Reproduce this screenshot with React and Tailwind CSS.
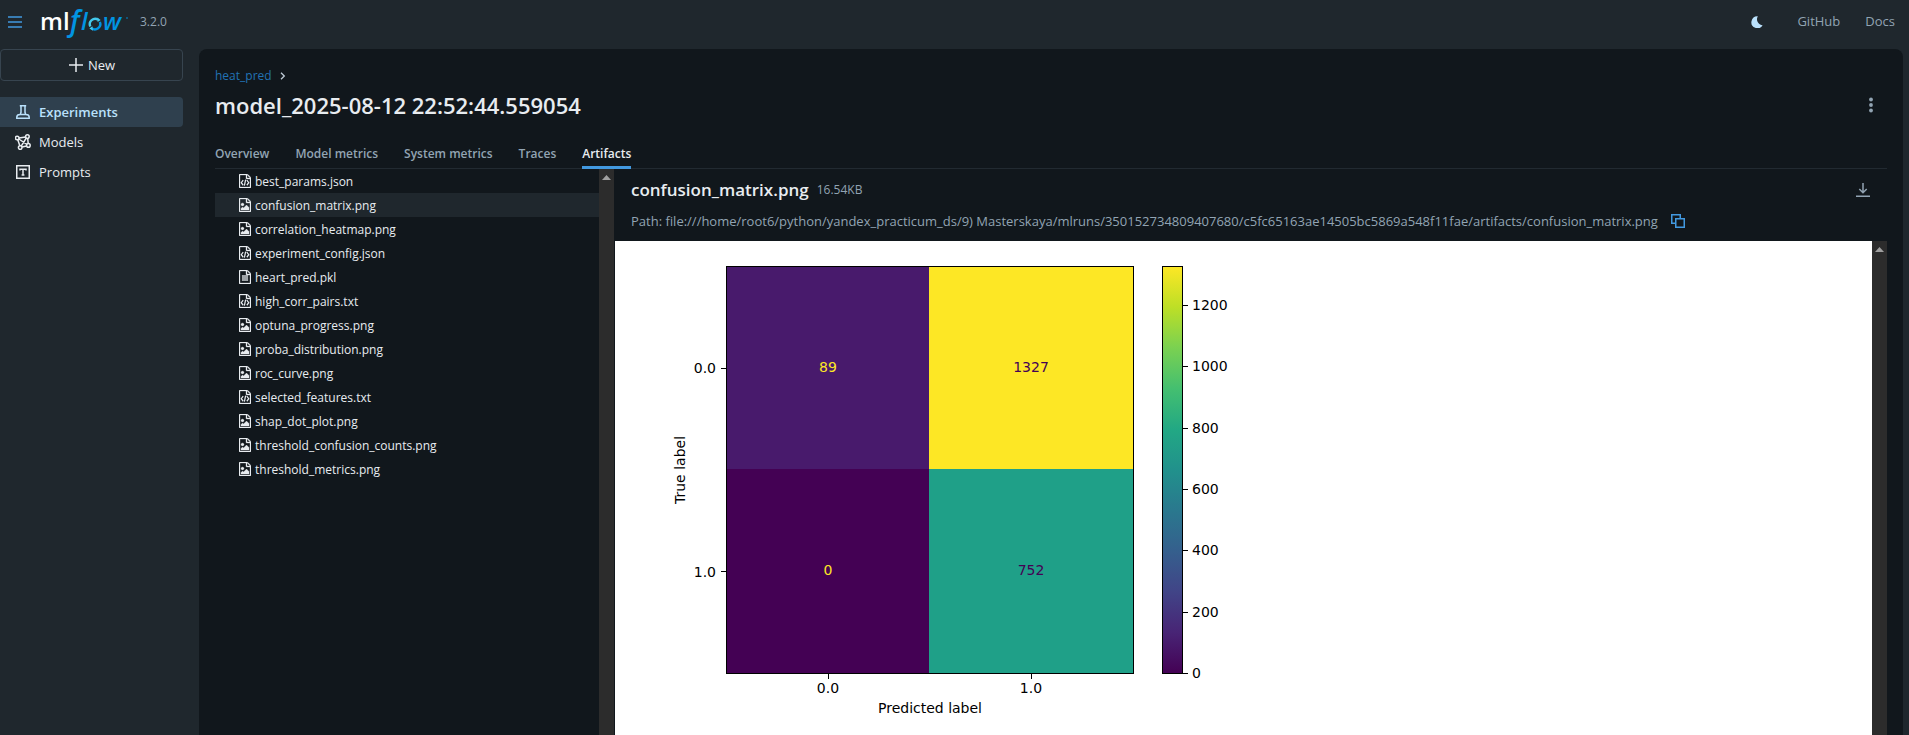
import React from "react";

const FILES = [
  ["best_params.json", "code"],
  ["confusion_matrix.png", "image"],
  ["correlation_heatmap.png", "image"],
  ["experiment_config.json", "code"],
  ["heart_pred.pkl", "text"],
  ["high_corr_pairs.txt", "code"],
  ["optuna_progress.png", "image"],
  ["proba_distribution.png", "image"],
  ["roc_curve.png", "image"],
  ["selected_features.txt", "code"],
  ["shap_dot_plot.png", "image"],
  ["threshold_confusion_counts.png", "image"],
  ["threshold_metrics.png", "image"],
];

const TABS = ["Overview", "Model metrics", "System metrics", "Traces", "Artifacts"];

function FileIcon({ kind }) {
  return (
    <svg viewBox="0 0 1536 1792" className="h-[14px] w-3 shrink-0" fill="currentColor" stroke="currentColor" strokeWidth="40" aria-hidden="true">
      <path d="M1468 380q28 28 48 76t20 88v1152q0 40-28 68t-68 28h-1344q-40 0-68-28t-28-68v-1600q0-40 28-68t68-28h896q40 0 88 20t76 48zm-444-244v376h376q-10-29-22-41l-313-313q-12-12-41-22zm384 1528v-1024h-416q-40 0-68-28t-28-68v-416h-768v1536h1280z" />
      {kind === "image" && (
        <path d="M1280 1216v320h-1024v-192l192-192 128 128 384-384zM448 1024q-80 0-136-56t-56-136 56-136 136-56 136 56 56 136-56 136-136 56z" />
      )}
      {kind === "code" && (
        <path d="M540 780l-250 330 250 330M1000 780l250 330-250 330M850 720l-160 780" fill="none" strokeWidth="160" />
      )}
      {kind === "text" && <path d="M384 704h768v128h-768zM384 960h768v128h-768zM384 1216h768v128h-768z" />}
    </svg>
  );
}

function FlaskIcon() {
  return (
    <svg viewBox="0 0 16 16" className="size-4" fill="none" stroke="currentColor" strokeWidth="1.5" aria-hidden="true">
      <path d="M4.8 1.75h6.4M6 1.75v6.5L5.2 10.4M10 1.75v6.5l.8 2.15M5.2 10.4h5.6c1.9 0 3.4 1.2 3.4 2.6v1.25H1.8V13c0-1.4 1.5-2.6 3.4-2.6z" />
    </svg>
  );
}

function ModelsIcon() {
  return (
    <svg viewBox="0 0 16 16" className="size-4" fill="none" stroke="currentColor" strokeWidth="1.5" aria-hidden="true">
      <circle cx="2.2" cy="4" r="1.8" />
      <circle cx="12.4" cy="2.6" r="1.8" />
      <circle cx="13.4" cy="11.4" r="1.8" />
      <circle cx="5.2" cy="13.6" r="1.8" />
      <path d="M4 3.9l6.6-1M12.7 4.4l.5 5.2M11.7 11.9L7 13.1M4.8 11.8L2.8 5.700M3.8 5l8.1 5.400M11.300 4L6.200 12.100" />
    </svg>
  );
}

function PromptsIcon() {
  return (
    <svg viewBox="0 0 16 16" className="size-4" fill="none" stroke="currentColor" strokeWidth="1.5" aria-hidden="true">
      <path d="M1.75 1.75h12.5v12.5H1.75zM5 6.6V5.2h6v1.4M8 5.2v5.9M6.6 11.1h2.8" />
    </svg>
  );
}

function Logo() {
  return (
    <svg viewBox="0 0 90 44" className="h-11 w-[90px] overflow-visible" role="img" aria-label="mlflow">
      <text x="0" y="30" fontFamily="Open Sans, sans-serif" fontSize="24" fontWeight="600" fill="#fff">ml</text>
      <g fill="#0194e2" fontFamily="Open Sans, sans-serif" fontStyle="italic" fontWeight="600">
        <text x="30" y="31" fontSize="28">f</text>
        <text x="41" y="30" fontSize="24">l</text>
        <text x="63" y="30" fontSize="24">w</text>
      </g>
      <g fill="none" strokeWidth="2.4">
        <path d="M50.3 26.5a5.4 5.4 0 0 1 7.8-6.8" stroke="#43c9ed" />
        <path d="M59.9 21.9a5.4 5.4 0 0 1-8.4 6.2" stroke="#0194e2" />
      </g>
      <path d="M57.2 17.6l.4 4.4 3.1-2zM53 30.8l-.6-4.6-3 2.4z" fill="#43c9ed" />
      <circle cx="87" cy="18" r="0.8" fill="#0194e2" />
    </svg>
  );
}

function Scrollbar() {
  return (
    <div className="w-[15px] shrink-0 bg-[#2c2c2c] pt-[6px]" aria-hidden="true">
      <svg viewBox="0 0 15 5" className="w-[15px]" fill="#a0a0a0">
        <path d="M7.5 0l4.5 5h-9z" />
      </svg>
    </div>
  );
}

const VIRIDIS = ["#440154", "#482475", "#414487", "#355f8d", "#2a788e", "#21918c", "#22a884", "#44bf70", "#7ad151", "#bddf26", "#fde725"];

function ConfusionMatrix() {
  const barTicks = [0, 200, 400, 600, 800, 1000, 1200];
  return (
    <svg viewBox="0 0 704 528" className="h-[528px] w-[704px] shrink-0" fontFamily="DejaVu Sans, sans-serif" fontSize="14" role="img" aria-label="Confusion matrix">
      <defs>
        <linearGradient id="viridis" x1="0" y1="1" x2="0" y2="0">
          {VIRIDIS.map((c, i) => (
            <stop key={c} offset={i / 10} stopColor={c} />
          ))}
        </linearGradient>
      </defs>
      <rect x="111" y="25" width="203" height="203" fill="#481a6c" />
      <rect x="314" y="25" width="205" height="203" fill="#fde725" />
      <rect x="111" y="228" width="203" height="204" fill="#440154" />
      <rect x="314" y="228" width="205" height="204" fill="#1fa088" />
      <rect x="111.5" y="25.5" width="407" height="407" fill="none" stroke="#000" />
      <g textAnchor="middle">
        <text x="213" y="131" fill="#fde725">89</text>
        <text x="416" y="131" fill="#440154">1327</text>
        <text x="213" y="334" fill="#fde725">0</text>
        <text x="416" y="334" fill="#440154">752</text>
        <text x="213" y="452">0.0</text>
        <text x="416" y="452">1.0</text>
        <text x="315" y="472">Predicted label</text>
        <text transform="translate(70 229) rotate(-90)">True label</text>
      </g>
      <g textAnchor="end">
        <text x="101" y="132">0.0</text>
        <text x="101" y="336">1.0</text>
      </g>
      <path d="M106 127.5h5M106 330.5h5M213.5 433v5M416.5 433v5" stroke="#000" />
      <rect x="547.5" y="25.5" width="20" height="407" fill="url(#viridis)" stroke="#000" />
      {barTicks.map((v) => {
        const y = Math.round(432 - (v / 1327) * 407);
        return (
          <g key={v}>
            <path d={`M568 ${y + 0.5}h5`} stroke="#000" />
            <text x="577" y={y + 5}>{v}</text>
          </g>
        );
      })}
    </svg>
  );
}

function NavItem({ icon, label, active }) {
  return (
    <a
      href="#"
      aria-current={active ? "page" : undefined}
      className={
        active
          ? "flex h-[30px] items-center gap-2 rounded-r bg-[#2f404e] pl-[15px] text-[13px] font-semibold text-[#bae1fc]"
          : "flex h-[30px] items-center gap-2 rounded-r pl-[15px] text-[13px] text-[#e8ecf0]"
      }
    >
      {icon}
      <span className="pt-px">{label}</span>
    </a>
  );
}

export default function App() {
  return (
    <div className="flex h-screen flex-col overflow-hidden bg-[#1f272d] font-['Open_Sans',sans-serif] text-[13px] text-[#e8ecf0]">
      <header className="flex h-[49px] shrink-0 items-center pr-[14px] pb-[6px] pl-2">
        <button aria-label="Toggle sidebar" className="text-[#4299e0]">
          <svg viewBox="0 0 14 12" className="h-3 w-[14px]" fill="none" stroke="currentColor" strokeWidth="1.5">
            <path d="M0 1h14M0 6h14M0 11h14" />
          </svg>
        </button>
        <a href="#" className="ml-[18px]">
          <Logo />
        </a>
        <span className="ml-[10px] text-xs text-[#92a4b3]">3.2.0</span>
        <nav className="ml-auto flex items-center text-[#92a4b3]">
          <button aria-label="Dark mode" className="mr-[34px] text-[#bae1fc]">
            <svg viewBox="0 0 12 12" className="size-3" fill="currentColor">
              <path d="M6.8 0.2A6 6 0 1 0 11.6 9.2 6 6 0 0 1 6.8 0.2z" />
            </svg>
          </button>
          <a href="#" className="mr-[25px]">GitHub</a>
          <a href="#">Docs</a>
        </nav>
      </header>
      <div className="flex min-h-0 flex-1">
        <aside className="w-[183px] shrink-0">
          <button className="flex h-8 w-full items-center justify-center gap-1 rounded border border-[#37444f]">
            <svg viewBox="0 0 16 16" className="size-4" fill="none" stroke="currentColor" strokeWidth="1.5" aria-hidden="true">
              <path d="M8 1v14M1 8h14" />
            </svg>
            <span className="pt-px">New</span>
          </button>
          <nav className="mt-4">
            <NavItem icon={<FlaskIcon />} label="Experiments" active />
            <NavItem icon={<ModelsIcon />} label="Models" />
            <NavItem icon={<PromptsIcon />} label="Prompts" />
          </nav>
        </aside>
        <main className="mr-[6px] ml-4 flex min-w-0 flex-1 flex-col rounded-t-lg bg-[#11171c] px-4 pt-4">
          <div className="flex h-5 items-center gap-2">
            <a href="#" className="pt-px text-xs text-[#2272b4]">heat_pred</a>
            <svg viewBox="0 0 6 8" className="mt-[2px] h-2 w-[6px]" fill="none" stroke="#c0cdd8" strokeWidth="1.3" aria-hidden="true">
              <path d="M1 0.8L4.3 4 1 7.2" />
            </svg>
          </div>
          <div className="flex h-10 items-center justify-between">
            <h1 className="text-[22px] font-semibold">model_2025-08-12 22:52:44.559054</h1>
            <button aria-label="More actions" className="flex w-8 justify-center text-[#92a4b3]">
              <svg viewBox="0 0 4 16" className="h-4 w-1" fill="currentColor">
                <circle cx="2" cy="2.5" r="1.9" />
                <circle cx="2" cy="8" r="1.9" />
                <circle cx="2" cy="13.5" r="1.9" />
              </svg>
            </button>
          </div>
          <div role="tablist" className="mt-3 flex h-8 shrink-0 gap-[26px] border-b border-[#222a31]">
            {TABS.map((t) => (
              <button
                key={t}
                role="tab"
                aria-selected={t === "Artifacts"}
                className={
                  t === "Artifacts"
                    ? "h-8 border-b-[3px] border-[#4299e0] pt-[5px] text-xs font-semibold text-[#e8ecf0]"
                    : "h-8 border-b-[3px] border-transparent pt-[5px] text-xs font-semibold text-[#92a4b3]"
                }
              >
                {t}
              </button>
            ))}
          </div>
          <div className="flex min-h-0 flex-1">
            <ul className="w-96 shrink-0">
              {FILES.map(([name, kind]) => (
                <li key={name} className={name === "confusion_matrix.png" ? "bg-[#1f272d]" : ""}>
                  <button className="flex h-6 w-full items-center gap-1 pl-6 text-xs">
                    <FileIcon kind={kind} />
                    <span className="pt-px">{name}</span>
                  </button>
                </li>
              ))}
            </ul>
            <Scrollbar />
            <section className="ml-px flex min-w-0 flex-1 flex-col">
              <div className="flex h-[72px] shrink-0 flex-col justify-between py-2 pr-4 pl-4">
                <div className="flex items-center gap-2">
                  <h2 className="pt-px text-[17px] leading-6 font-semibold">confusion_matrix.png</h2>
                  <span className="pt-px text-xs text-[#92a4b3]">16.54KB</span>
                  <button aria-label="Download artifact" className="ml-auto text-[#92a4b3]">
                    <svg viewBox="0 0 16 16" className="size-4" fill="none" stroke="currentColor" strokeWidth="1.5">
                      <path d="M8 1v9.5M4.3 7L8 10.700 11.700 7M1 14.250h14" />
                    </svg>
                  </button>
                </div>
                <div className="flex h-6 items-center gap-3 whitespace-nowrap text-[#92a4b3]">
                  <span className="pt-px">
                    Path: file:///home/root6/python/yandex_practicum_ds/9) Masterskaya/mlruns/350152734809407680/c5fc65163ae14505bc5869a548f11fae/artifacts/confusion_matrix.png
                  </span>
                  <button aria-label="Copy path" className="text-[#4299e0]">
                    <svg viewBox="0 0 16 16" className="size-4" fill="none" stroke="currentColor" strokeWidth="1.5">
                      <path d="M5 10.250H1.750V1.750h8.500V5M5.750 5.750h8.500v8.500h-8.500z" />
                    </svg>
                  </button>
                </div>
              </div>
              <div className="flex min-h-0 flex-1 bg-white">
                <div className="min-w-0 flex-1 overflow-hidden">
                  <ConfusionMatrix />
                </div>
                <Scrollbar />
              </div>
            </section>
          </div>
        </main>
      </div>
    </div>
  );
}
